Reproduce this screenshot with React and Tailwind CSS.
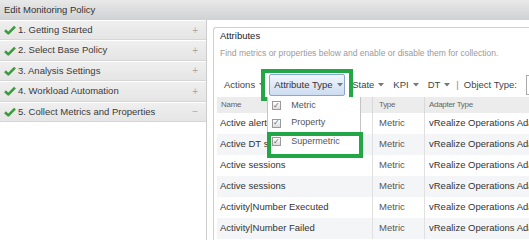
import React from 'react';

const steps = [
  '1. Getting Started',
  '2. Select Base Policy',
  '3. Analysis Settings',
  '4. Workload Automation',
  '5. Collect Metrics and Properties',
];

const rows = [
  'Active alerts',
  'Active DT sessions',
  'Active sessions',
  'Active sessions',
  'Activity|Number Executed',
  'Activity|Number Failed',
];

function Check() {
  return (
    <svg width="12" height="10" viewBox="0 0 12 10" className="shrink-0">
      <path d="M1 5.2 L4.3 8.4 L11 1.6" fill="none" stroke="#3c9b3f" strokeWidth="2.6" strokeLinejoin="round" />
    </svg>
  );
}

function Caret() {
  return (
    <svg width="6" height="4" viewBox="0 0 6 4" className="ml-[4px] shrink-0">
      <path d="M0 0 H6 L3 3.5 Z" fill="#777" />
    </svg>
  );
}

function Box() {
  return (
    <div className="w-[9px] h-[9px] border border-[#9a9a9a] bg-gradient-to-b from-white to-[#dcdcdc] flex items-center justify-center text-[8px] leading-none text-[#5a6f8c]">
      ✓
    </div>
  );
}

export default function App() {
  return (
    <div className="w-[529px] h-[240px] overflow-hidden bg-white font-['Liberation_Sans',Arial,sans-serif] text-[9.5px] text-[#333]">
      {/* title */}
      <div className="h-[20px] bg-gradient-to-b from-[#e9e9e9] to-[#d0d1d3] flex items-center pl-[4px] text-[#333]">
        Edit Monitoring Policy
      </div>

      <div className="flex h-[220px]">
        {/* steps */}
        <div className="w-[207px] border-r border-[#cbcbcb] shrink-0">
          {steps.map((s, i) => (
            <div key={s} className="h-[20.4px] flex items-center pl-[4px] pr-[8px] bg-gradient-to-b from-[#efefef] to-[#e5e5e5] border-t border-white border-b border-b-[#d6d6d6]">
              <Check />
              <span className="ml-[2px] flex-1 text-[#3a3a3a]">{s}</span>
              <span className="text-[#aaa] text-[10px]">{i === 4 ? '−' : '+'}</span>
            </div>
          ))}
        </div>

        {/* attributes panel */}
        <div className="flex-1 ml-[6px] mt-[7px] border-l border-t border-[#cfcfcf] rounded-tl-[3px] relative">
          <div className="pl-[6px] pt-[1px] leading-[14px] text-[#222]">Attributes</div>
          <div className="pl-[6px] mt-[4px] leading-[12px] text-[8.5px] text-[#9a9a9a] whitespace-nowrap">
            Find metrics or properties below and enable or disable them for collection.
          </div>

          {/* toolbar */}
          <div className="mt-[14px] h-[24px] flex items-center pl-[10px] text-[#444] whitespace-nowrap">
            <span>Actions</span>
            <Caret />
            <div className="relative ml-[4px] z-10">
              <div className="w-[76px] h-[22px] rounded-[2px] border border-[#8aa7d1] bg-gradient-to-b from-[#f1f6fd] to-[#cddcf1] flex items-center pl-[4px] text-[#333]">
                <span>Attribute Type</span>
                <Caret />
              </div>
              <div className="absolute left-[-8px] right-[-8px] top-[-5px] bottom-[-5px] border-4 border-[#22a646]" />

              {/* menu */}
              <div className="absolute left-[-2px] top-[23px] w-[94px] bg-white border border-[#c4c4c4] border-t-0 pb-[6px] text-[9px] text-[#555]">
                <div className="h-[17px] flex items-center pl-[4px]"><Box /><span className="ml-[10px]">Metric</span></div>
                <div className="h-[18px] flex items-center pl-[4px]"><Box /><span className="ml-[10px]">Property</span></div>
                <div className="h-[19px] flex items-center pl-[4px]"><Box /><span className="ml-[10px]">Supermetric</span></div>
                <div className="absolute left-[-1px] top-[35px] w-[96px] h-[26px] border-4 border-[#22a646]" />
              </div>
            </div>
            <span className="ml-[7px]">State</span>
            <Caret />
            <span className="ml-[9px]">KPI</span>
            <Caret />
            <span className="ml-[9px]">DT</span>
            <Caret />
            <span className="ml-[6px] text-[#888]">|</span>
            <span className="ml-[5px]">Object Type:</span>
            <div className="ml-[9px] w-[40px] h-[20px] border border-[#aaa] bg-white shrink-0" />
          </div>

          {/* table */}
          <div className="ml-[3px]">
            <div className="h-[16px] flex bg-[#ececec] text-[8px] tracking-[-0.3px] text-[#666]">
              <div className="w-[155px] flex items-center pl-[4px]">Name</div>
              <div className="w-[52px] flex items-center pl-[6px] border-l border-[#d8d8d8]">Type</div>
              <div className="flex-1 flex items-center pl-[4px] border-l border-[#d8d8d8] whitespace-nowrap">Adapter Type</div>
            </div>
            {rows.map((r, i) => (
              <div key={i} className={`h-[21px] flex whitespace-nowrap ${i % 2 === 1 ? 'bg-[#f4f5f7]' : 'bg-white'}`}>
                <div className="w-[155px] flex items-center pl-[3px]">{r}</div>
                <div className="w-[52px] flex items-center pl-[6px] border-l border-[#e0e0e0] text-[#555]">Metric</div>
                <div className="flex-1 flex items-center pl-[4px] border-l border-[#e0e0e0] overflow-hidden">vRealize Operations Adapter</div>
              </div>
            ))}
          </div>
        </div>
      </div>
    </div>
  );
}
